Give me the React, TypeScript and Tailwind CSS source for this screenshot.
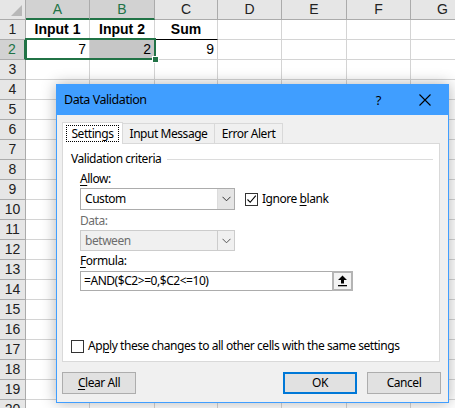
import React from "react";

const cols = ["A", "B", "C", "D", "E", "F", "G"];
const rows = Array.from({ length: 20 }, (_, i) => i + 1);

function Chevron({ color = "#333" }: { color?: string }) {
  return (
    <svg width="9" height="6" viewBox="0 0 9 6">
      <path d="M0.5 0.8 L4.5 4.8 L8.5 0.8" fill="none" stroke={color} strokeWidth="1" />
    </svg>
  );
}

function Cell({ r, c }: { r: number; c: number }) {
  let content: React.ReactNode = null;
  let cls = "h-[20px] border-r border-b border-[#d4d4d4] flex items-center px-[3px] text-[14px] text-black";
  if (r === 1) {
    if (c === 0) content = "Input 1";
    if (c === 1) content = "Input 2";
    if (c === 2) content = "Sum";
    if (c <= 2) cls = "h-[20px] border-r border-b border-r-[#d4d4d4] border-b-black flex items-center justify-center px-[3px] text-[14px] font-bold text-black";
  }
  if (r === 2) {
    if (c === 0) content = "7";
    if (c === 1) content = "2";
    if (c === 2) content = "9";
    if (c <= 2) cls += " justify-end";
    if (c === 1) cls += " bg-[#c6c6c6]";
  }
  return <div className={cls}>{content}</div>;
}

export default function App() {
  return (
    <div className="relative w-[455px] h-[408px] overflow-hidden bg-white" style={{ fontFamily: '"Liberation Sans", Arial, sans-serif' }}>
      {/* Sheet grid */}
      <div className="grid grid-cols-[26px_64px_65px_63px_64px_65px_64px_64px] w-[475px]">
        <div className="h-[20px] bg-[#e6e6e6] border-r border-b border-[#ababab] relative">
          <div className="absolute right-[3px] bottom-[3px] w-0 h-0 border-l-[11px] border-l-transparent border-b-[11px] border-b-[#b8b8b8]" />
        </div>
        {cols.map((l, i) => (
          <div
            key={l}
            className={
              i <= 1
                ? "h-[20px] bg-[#d2d2d2] border-r border-r-[#ababab] border-b-2 border-b-[#217346] flex items-center justify-center text-[14px] text-[#217346]"
                : "h-[20px] bg-[#e6e6e6] border-r border-b border-[#ababab] flex items-center justify-center text-[14px] text-[#222]"
            }
          >
            {l}
          </div>
        ))}
        {rows.map((r) => (
          <React.Fragment key={r}>
            <div
              className={
                r === 2
                  ? "h-[20px] bg-[#d2d2d2] border-b border-b-[#ababab] border-r-2 border-r-[#217346] flex items-center justify-center text-[14px] text-[#217346]"
                  : "h-[20px] bg-[#e6e6e6] border-r border-b border-[#ababab] flex items-center justify-center text-[14px] text-[#222]"
              }
            >
              {r}
            </div>
            {cols.map((_, c) => (
              <Cell key={c} r={r} c={c} />
            ))}
          </React.Fragment>
        ))}
      </div>

      {/* Selection overlay */}
      <div className="absolute left-[25px] top-[38px] w-[131px] h-[22px] border-2 border-[#217346] pointer-events-none" />
      <div className="absolute left-[152px] top-[56px] w-[7px] h-[7px] bg-[#217346] border border-white" />

      {/* Dialog */}
      <div
        className="absolute left-[56px] top-[84px] w-[393px] h-[319px] border border-[#409eff] bg-[#f0f0f0] flex flex-col shadow-[0_0_14px_rgba(0,0,0,0.3)] text-[12px] leading-[16px] tracking-[-0.45px] text-black"
        style={{ fontFamily: '"Noto Sans", "Open Sans", sans-serif' }}
      >
        <div className="h-[30px] bg-[#409eff] flex items-center pl-[7px] shrink-0">
          <span className="text-[12.5px]">Data Validation</span>
          <span className="ml-auto mr-[38px] text-[13px]">?</span>
          <svg width="12" height="12" viewBox="0 0 12 12" className="mr-[17px]">
            <path d="M0.5 0.5 L11.5 11.5 M11.5 0.5 L0.5 11.5" stroke="#000" strokeWidth="1.1" />
          </svg>
        </div>
        <div className="flex-1 flex flex-col pl-[5px] pt-[7px]">
          {/* Tabs */}
          <div className="flex h-[21px] items-end">
            <div className="relative z-10 w-[61px] h-[22px] -mb-px bg-white border-l border-t border-r border-[#d9d9d9] flex items-center justify-center">
              <span className="border border-dotted border-black px-[4px] py-[1px] leading-[13px]">Settings</span>
            </div>
            <div className="w-[92px] h-[20px] bg-[#f0f0f0] border-t border-r border-[#d9d9d9] flex items-center justify-center">
              Input Message
            </div>
            <div className="w-[68px] h-[20px] bg-[#f0f0f0] border-t border-r border-[#d9d9d9] flex items-center justify-center">
              Error Alert
            </div>
          </div>
          {/* Panel */}
          <div className="w-[378px] h-[219px] bg-white border border-[#d9d9d9] flex flex-col pl-[8px] pb-[7px]">
            <div className="mt-[7px] flex items-center pr-[6px]">
              <span>Validation criteria</span>
              <div className="flex-1 h-px bg-[#dcdcdc] ml-[6px]" />
            </div>
            <div className="pl-[9px] flex flex-col">
              <div className="mt-[4px]">
                <span className="underline underline-offset-2">A</span>llow:
              </div>
              <div className="mt-[1px] flex items-center">
                <div className="w-[155px] h-[22px] border border-[#acacac] bg-white flex">
                  <div className="flex-1 flex items-center pl-[4px]">Custom</div>
                  <div className="w-[17px] bg-[#e5e5e5] border-l border-[#dcdcdc] flex items-center justify-center">
                    <Chevron />
                  </div>
                </div>
                <div className="ml-[10px] w-[13px] h-[13px] border border-[#333] bg-white flex items-center justify-center">
                  <svg width="11" height="11" viewBox="0 0 11 11">
                    <path d="M1.5 5.5 L4.2 8.3 L9.8 1.6" fill="none" stroke="#000" strokeWidth="1.1" />
                  </svg>
                </div>
                <span className="ml-[4px]">
                  Ignore <span className="underline underline-offset-2">b</span>lank
                </span>
              </div>
              <div className="mt-[3px] text-[#6d6d6d]">Data:</div>
              <div className="mt-[1px] w-[155px] h-[21px] border border-[#cccccc] bg-[#f0f0f0] flex">
                <div className="flex-1 flex items-center pl-[4px] text-[#6d6d6d]">between</div>
                <div className="w-[17px] border-l border-[#cccccc] flex items-center justify-center">
                  <Chevron color="#555" />
                </div>
              </div>
              <div className="mt-[2px]">
                <span className="underline underline-offset-2">F</span>ormula:
              </div>
              <div className="mt-[2px] w-[273px] h-[20px] border border-[#acacac] bg-white flex">
                <div className="flex-1 flex items-center pl-[3px]">=AND($C2&gt;=0,$C2&lt;=10)</div>
                <div className="w-[21px] -my-px -mr-px border-2 border-[#b4b4b4] bg-[#f3f3f3] flex items-center justify-center">
                  <svg width="11" height="12" viewBox="0 0 11 12">
                    <path d="M5.5 0.5 L10 5 L7 5 L7 8.5 L4 8.5 L4 5 L1 5 Z" fill="#000" />
                    <rect x="1" y="10" width="9" height="1.3" fill="#000" />
                  </svg>
                </div>
              </div>
            </div>
            <div className="mt-auto flex items-center">
              <div className="w-[13px] h-[13px] border border-[#333] bg-white" />
              <span className="ml-[4px]">
                Ap<span className="underline underline-offset-2">p</span>ly these changes to all other cells with the same settings
              </span>
            </div>
          </div>
          {/* Buttons */}
          <div className="mt-[10px] w-[379px] flex">
            <div className="w-[74px] h-[22px] bg-[#e1e1e1] border border-[#adadad] flex items-center justify-center">
              <span>
                <span className="underline underline-offset-2">C</span>lear All
              </span>
            </div>
            <div className="ml-auto w-[74px] h-[22px] bg-[#e1e1e1] border-2 border-[#0078d7] flex items-center justify-center">
              OK
            </div>
            <div className="ml-[10px] w-[74px] h-[22px] bg-[#e1e1e1] border border-[#adadad] flex items-center justify-center">
              Cancel
            </div>
          </div>
        </div>
      </div>
    </div>
  );
}
